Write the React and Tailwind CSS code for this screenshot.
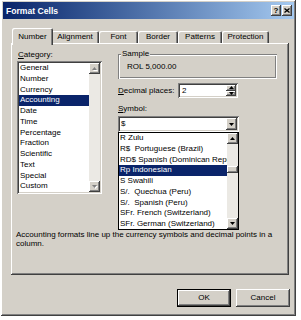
const RAISED = "shadow-[inset_-1px_-1px_#404040,inset_1px_1px_#ffffff,inset_-2px_-2px_#808080,inset_2px_2px_#d4d0c8]";
const SUNKEN = "shadow-[inset_1px_1px_#808080,inset_-1px_-1px_#ffffff,inset_2px_2px_#404040,inset_-2px_-2px_#d4d0c8]";

function Tri({ up = false, color = "#000000" }) {
  return (
    <svg width="5" height="3" viewBox="0 0 5 3" className="block">
      <polygon points={up ? "0,3 5,3 2.5,0" : "0,0 5,0 2.5,3"} fill={color} />
    </svg>
  );
}

function DisTri({ up = false }) {
  return (
    <svg width="6" height="4" viewBox="0 0 6 4" className="block">
      <polygon points={up ? "1,4 6,4 3.5,1" : "1,1 6,1 3.5,4"} fill="#ffffff" />
      <polygon points={up ? "0,3 5,3 2.5,0" : "0,0 5,0 2.5,3"} fill="#808080" />
    </svg>
  );
}

const cats = ["General", "Number", "Currency", "Accounting", "Date", "Time", "Percentage", "Fraction", "Scientific", "Text", "Special", "Custom"];
const syms = [
  "R Zulu",
  "R$  Portuguese (Brazil)",
  "RD$ Spanish (Dominican Republic)",
  "Rp Indonesian",
  "S Swahili",
  "S/.  Quechua (Peru)",
  "S/.  Spanish (Peru)",
  "SFr. French (Switzerland)",
  "SFr. German (Switzerland)",
];

const tabs = [
  { t: "Number", w: "w-[41px]", sel: true },
  { t: "Alignment", w: "w-[48px]" },
  { t: "Font", w: "w-[39px]" },
  { t: "Border", w: "w-[40px]" },
  { t: "Patterns", w: "w-[44px]" },
  { t: "Protection", w: "w-[47px]" },
];

export default function App() {
  return (
    <div className="w-[301px] h-[320px] bg-white font-['Liberation_Sans',Arial,sans-serif] text-[8px] leading-[10px] text-black overflow-hidden">
      <div className={`ml-[1px] w-[295px] h-[316px] bg-[#d4d0c8] p-[2px] flex flex-col ${RAISED}`}>
        {/* Title bar */}
        <div className="h-[17px] flex items-center justify-between bg-linear-to-r from-[#0a246a] to-[#a6caf0] pl-[3px] pr-[2px]">
          <span className="text-white font-bold text-[8.6px]">Format Cells</span>
          <div className="flex gap-[1px]">
            <div className={`w-[10px] h-[11px] bg-[#d4d0c8] flex items-center justify-center font-bold text-[8px] leading-[8px] ${RAISED}`}>?</div>
            <div className={`w-[10px] h-[11px] bg-[#d4d0c8] flex items-center justify-center ${RAISED}`}>
              <svg width="6" height="5" viewBox="0 0 6 5" className="block">
                <path d="M0.5 0.5 L5.5 4.5 M5.5 0.5 L0.5 4.5" stroke="#000" strokeWidth="1.3" />
              </svg>
            </div>
          </div>
        </div>

        {/* Tabs */}
        <div className="mt-[9px] h-[15px] flex items-end pl-[11px] relative z-10">
          {tabs.map((tab) =>
            tab.sel ? (
              <div
                key={tab.t}
                className={`${tab.w} -mx-[2px] h-[17px] -mb-[2px] bg-[#d4d0c8] rounded-t-[2px] shadow-[inset_1px_1px_#ffffff,inset_-1px_0_#404040,inset_-2px_0_#808080] flex justify-center pt-[4px] relative z-10`}
              >
                {tab.t}
              </div>
            ) : (
              <div
                key={tab.t}
                className={`${tab.w} h-[12px] bg-[#d4d0c8] rounded-t-[2px] shadow-[inset_1px_1px_#ffffff,inset_-1px_0_#404040,inset_-2px_0_#808080] flex justify-center pt-[1px]`}
              >
                {tab.t}
              </div>
            )
          )}
        </div>

        {/* Panel */}
        <div className={`ml-[8px] w-[278px] h-[232px] relative ${RAISED}`}>
          <div className="pl-[6px] pt-[6px] flex">
            {/* Category */}
            <div className="w-[85px] flex flex-col">
              <div className="h-[12px] flex items-center pl-[1px]">
                <span>
                  <span className="underline underline-offset-1">C</span>ategory:
                </span>
              </div>
              <div className={`h-[133px] bg-white p-[2px] flex ${SUNKEN}`}>
                <div className="flex-1">
                  {cats.map((c, i) => (
                    <div
                      key={c}
                      className={`h-[10.75px] leading-[10.75px] pl-[1px] ${i === 3 ? "bg-[#0a246a] text-white" : ""}`}
                    >
                      {c}
                    </div>
                  ))}
                </div>
                <div className="w-[11px] flex flex-col justify-between bg-[#ebe9e4]">
                  <div className={`h-[11px] bg-[#d4d0c8] flex items-center justify-center ${RAISED}`}>
                    <DisTri up />
                  </div>
                  <div className={`h-[11px] bg-[#d4d0c8] flex items-center justify-center ${RAISED}`}>
                    <DisTri />
                  </div>
                </div>
              </div>
            </div>

            {/* Right column */}
            <div className="ml-[16px] w-[170px] flex flex-col">
              <div className="mt-[5px] w-[159px] h-[25px] relative shadow-[inset_1px_1px_#808080,inset_-1px_-1px_#ffffff,inset_2px_2px_#ffffff,inset_-2px_-2px_#808080] flex items-center pl-[9px]">
                <span className="absolute left-[3px] top-[-5px] bg-[#d4d0c8] px-[1px] leading-[10px]">Sample</span>
                <span className="mt-[1px]">ROL 5,000.00</span>
              </div>

              <div className="mt-[4px] h-[15px] flex items-center">
                <div className="w-[60px] pl-[-1px]">
                  <span className="underline underline-offset-1">D</span>ecimal places:
                </div>
                <div className={`w-[60px] h-[15px] bg-white p-[2px] flex ${SUNKEN}`}>
                  <div className="flex-1 pl-[2px] leading-[11px]">2</div>
                  <div className="w-[10px] flex flex-col">
                    <div className={`flex-1 bg-[#d4d0c8] flex items-center justify-center ${RAISED}`}>
                      <Tri up />
                    </div>
                    <div className={`flex-1 bg-[#d4d0c8] flex items-center justify-center ${RAISED}`}>
                      <Tri />
                    </div>
                  </div>
                </div>
              </div>

              <div className="mt-[6px] h-[10px] leading-[10px]">
                <span className="underline underline-offset-1">S</span>ymbol:
              </div>

              <div className={`mt-[2px] w-[121px] h-[16px] bg-white p-[2px] flex relative ${SUNKEN}`}>
                <div className="flex-1 pl-[1px] leading-[12px]">$</div>
                <div className={`w-[11px] bg-[#d4d0c8] flex items-center justify-center ${RAISED}`}>
                  <Tri />
                </div>

                {/* Dropdown list */}
                <div className="absolute left-0 top-[16px] w-[121px] h-[98px] border border-black bg-white flex z-20">
                  <div className="flex-1 min-w-0 overflow-hidden">
                    {syms.map((s, i) => (
                      <div
                        key={s}
                        className={`h-[10.75px] leading-[10.75px] pl-[1px] whitespace-pre overflow-hidden ${i === 3 ? "bg-[#0a246a] text-white" : ""}`}
                      >
                        {s}
                      </div>
                    ))}
                  </div>
                  <div className="w-[11px] flex flex-col bg-[#ebe9e4]">
                    <div className={`h-[11px] bg-[#d4d0c8] flex items-center justify-center ${RAISED}`}>
                      <Tri up />
                    </div>
                    <div className="flex-1 flex flex-col">
                      <div className={`mt-[22px] h-[7px] bg-[#d4d0c8] ${RAISED}`}></div>
                    </div>
                    <div className={`h-[11px] bg-[#d4d0c8] flex items-center justify-center ${RAISED}`}>
                      <Tri />
                    </div>
                  </div>
                </div>
              </div>
            </div>
          </div>

          <div className="mt-[36px] pl-[5px] leading-[9px]">
            Accounting formats line up the currency symbols and decimal points in a
            <br />
            column.
          </div>
        </div>

        {/* Buttons */}
        <div className="mt-[14px] flex justify-end gap-[5px] pr-[4px]">
          <div className="w-[54px] h-[18px] border border-black">
            <div className={`w-full h-full bg-[#d4d0c8] flex items-center justify-center ${RAISED}`}>OK</div>
          </div>
          <div className={`w-[54px] h-[18px] bg-[#d4d0c8] flex items-center justify-center ${RAISED}`}>Cancel</div>
        </div>
      </div>
    </div>
  );
}
